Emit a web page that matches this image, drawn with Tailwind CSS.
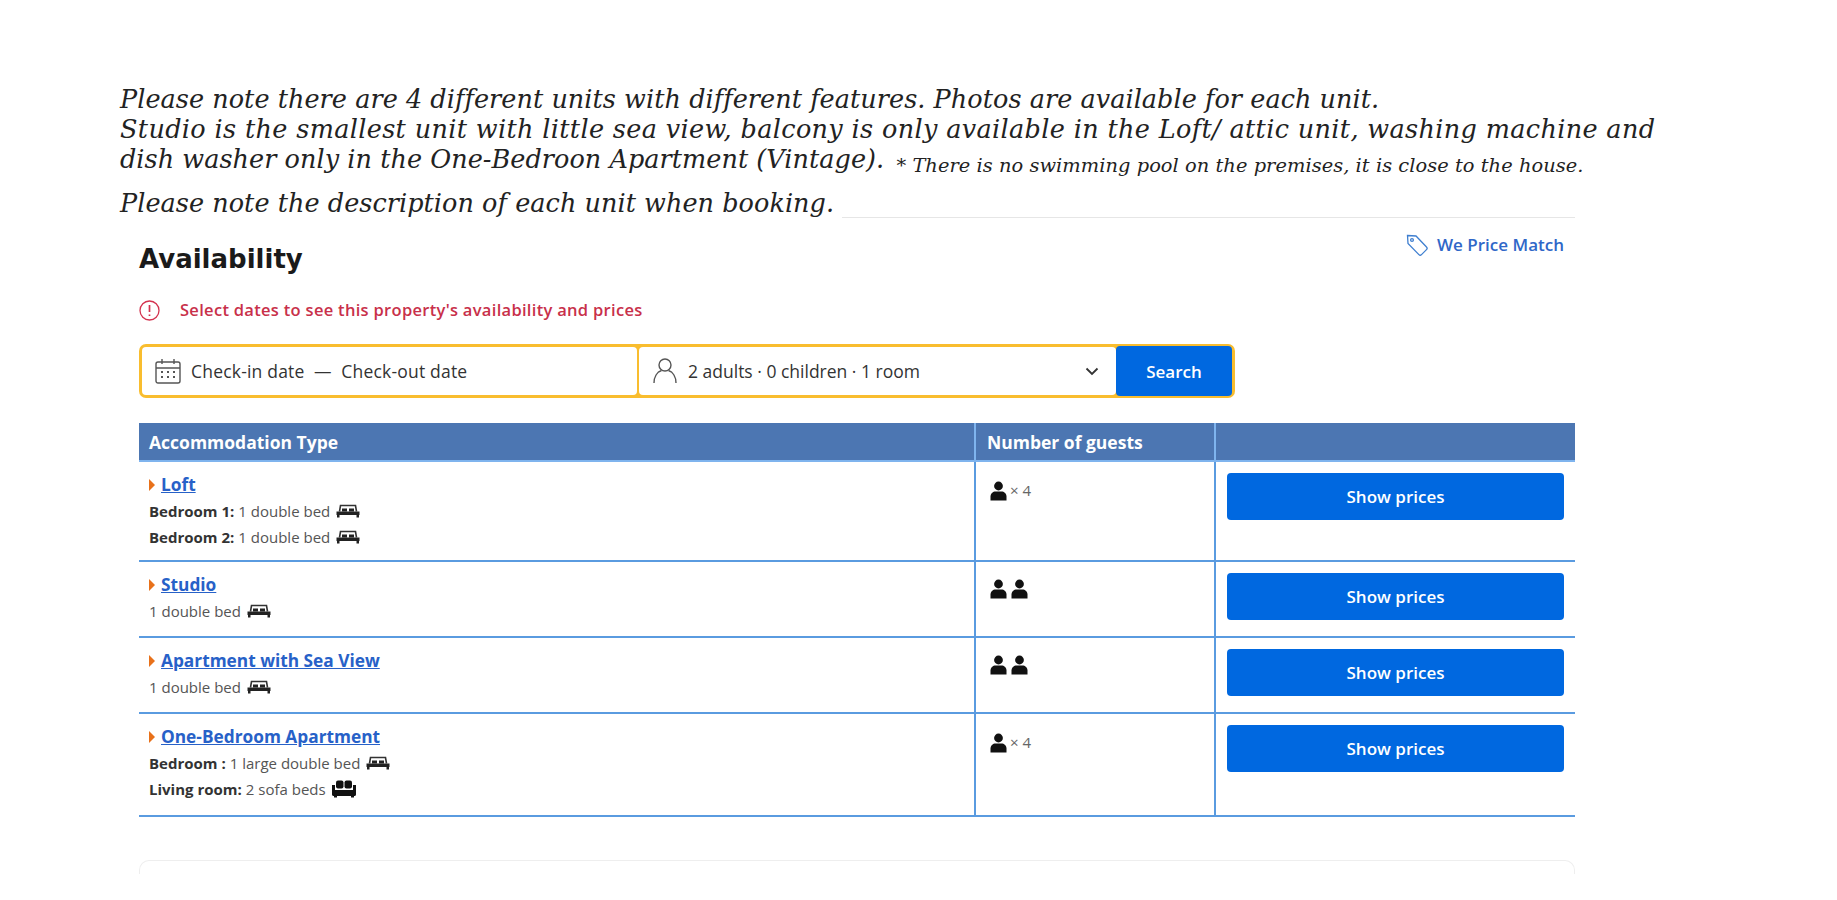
<!doctype html>
<html>
<head>
<meta charset="utf-8">
<script src="https://cdn.jsdelivr.net/npm/@tailwindcss/browser@4"></script>
</head>
<body class="bg-white w-[1837px] h-[900px] overflow-hidden font-['Open_Sans',sans-serif]">
<svg class="hidden">
  <symbol id="p" viewBox="0 0 16 20"><circle cx="8" cy="5" r="4.400" fill="#111"/><path d="M0 19.500v-4c0-3 2.500-5 5-5h6c2.500 0 5 2 5 5v4z" fill="#111"/></symbol>
  <symbol id="bed" viewBox="0 0 24 14"><path d="M3.500 7.500 4.500 1.500h15l1 6" fill="none" stroke="#333" stroke-width="1.600"/><path d="M6 4.500h5v3H6zM13 4.500h5v3h-5z" fill="#222"/><path d="M.5 7.500h23v3.500H.5z" fill="#222"/><path d="M1 11h2.500v2.500H1zM20.500 11H23v2.500h-2.500z" fill="#222"/></symbol>
  <symbol id="sofa" viewBox="0 0 24 18"><rect x="4" y="0.500" width="7.500" height="8" rx="2" fill="#111"/><rect x="12.500" y="0.500" width="7.500" height="8" rx="2" fill="#111"/><path d="M0 5h3v5h18V5h3v9.500c0 1-1 1.500-2 1.500v1.500h-3V16H5v1.500H2V16c-1 0-2-.5-2-1.500z" fill="#111"/></symbol>
</svg>

<main class="pt-[84px]">
  <section class="pl-[120px] font-['DejaVu_Serif',serif] italic text-[#222] text-[25.500px] leading-[30px] tracking-[0.05px]">
    <p class="whitespace-nowrap">Please note there are 4 different units with different features. Photos are available for each unit.</p>
    <p class="whitespace-nowrap tracking-[0.35px]">Studio is the smallest unit with little sea view, balcony is only available in the Loft/ attic unit, washing machine and</p>
    <p class="whitespace-nowrap">dish washer only in the One-Bedroon Apartment (Vintage). <span class="text-[19.400px] leading-none align-[-4px] ml-1">* There is no swimming pool on the premises, it is close to the house.</span></p>
    <div class="flex items-end w-[1455px] mt-[13px]">
      <p class="whitespace-nowrap">Please note the description of each unit when booking.</p>
      <div class="flex-1 ml-2 border-b border-[#e6e6e6]"></div>
    </div>
  </section>

  <section class="ml-[139px] w-[1436px]">
    <div class="flex justify-between items-start h-[58px]">
      <h2 class="font-['DejaVu_Sans',sans-serif] font-bold text-[26px] text-[#1a1a1a] leading-[34px] mt-[24px]">Availability</h2>
      <a class="flex items-center gap-[8px] mt-[15px] mr-[11px] text-[17px] font-semibold text-[#2f67c8] leading-[20px]">
        <svg width="24" height="24" viewBox="0 0 24 24" fill="none" stroke="#3f7fd0" stroke-width="1.300"><path d="M2.500 2.500 11 3 21.500 14c.8.800.8 1.800 0 2.600l-5 5c-.8.800-1.800.8-2.600 0L3 10.500z"/><circle cx="7" cy="7" r="1.400"/></svg>
        We Price Match
      </a>
    </div>

    <div class="flex items-center h-[24px] mt-[22px] text-[16.500px] tracking-[0.3px] font-semibold text-[#c8304a]">
      <svg width="21" height="21" viewBox="0 0 21 21" fill="none" stroke="#d4334f" stroke-width="1.300"><circle cx="10.500" cy="10.500" r="9.500"/><path d="M10.500 5v7M10.500 14.500v1.500" stroke-width="1.700"/></svg>
      <span class="ml-[20px]">Select dates to see this property's availability and prices</span>
    </div>

    <div class="flex w-[1096px] h-[54px] mt-[22px] bg-[#f9bd2e] p-[3px] rounded-[7px] text-[17.500px] text-[#333]">
      <div class="flex items-center w-[495px] bg-white rounded-[4px] pl-[13px] mr-[2px]">
        <svg width="26" height="26" viewBox="0 0 26 26" fill="none" stroke="#555" stroke-width="1.400"><rect x="1" y="4" width="24" height="21" rx="2"/><path d="M1 10h24M7 1v5M19 1v5"/><path d="M6 14h2M12 14h2M18 14h2M6 19h2M12 19h2M18 19h2" stroke-width="2"/></svg>
        <span class="ml-[10px] tracking-[0.2px]">Check-in date&nbsp; —&nbsp; Check-out date</span>
      </div>
      <div class="flex items-center w-[477px] bg-white rounded-[4px] pl-[13px]">
        <svg width="26" height="28" viewBox="0 0 26 28" fill="none" stroke="#555" stroke-width="1.400"><circle cx="13" cy="8" r="6"/><path d="M2 26c0-6 3-11 7.500-12.500M24 26c0-6-3-11-7.500-12.500"/></svg>
        <span class="ml-[10px]">2 adults · 0 children · 1 room</span>
        <svg class="ml-auto mr-[17px]" width="14" height="9" viewBox="0 0 14 9" fill="none" stroke="#333" stroke-width="1.800"><path d="M1.500 1.500 7 7l5.500-5.500"/></svg>
      </div>
      <button class="w-[116px] -my-[1px] -mr-[1px] bg-[#0068e0] text-white text-[17px] font-semibold rounded-[4px]">Search</button>
    </div>

    <table class="table-fixed w-[1436px] mt-[25px] text-[15px] text-[#333] font-['Open_Sans',sans-serif]">
      <colgroup><col class="w-[836px]"><col class="w-[240px]"><col></colgroup>
      <thead>
        <tr class="h-[38px] bg-[#4c76b2] text-white text-left text-[17.500px] font-bold">
          <th class="pl-[10px] border-b-2 border-[#7fb4ee]">Accommodation Type</th>
          <th class="pl-[11px] border-x-2 border-b-2 border-[#7fb4ee]">Number of guests</th>
          <th class="border-b-2 border-[#7fb4ee]"></th>
        </tr>
      </thead>
      <tbody>
        <tr class="h-[100px] border-b-2 border-[#5a9be0] align-top">
          <td class="pl-[10px] pt-[12px]">
            <div class="flex items-center h-[22px]"><span class="w-0 h-0 border-y-[6px] border-y-transparent border-l-[6px] border-l-[#e8711a] mr-[6px]"></span><a class="text-[17.300px] font-bold text-[#2761c8] underline">Loft</a></div>
            <div class="flex items-center h-[26px] mt-[2px]"><b>Bedroom 1:</b><span class="ml-1 text-[#555]">1 double bed</span><svg class="ml-[6px]" width="24" height="14"><use href="#bed"/></svg></div>
            <div class="flex items-center h-[26px]"><b>Bedroom 2:</b><span class="ml-1 text-[#555]">1 double bed</span><svg class="ml-[6px]" width="24" height="14"><use href="#bed"/></svg></div>
          </td>
          <td class="pl-[14px] pt-[17px] border-x-2 border-[#5a9be0]"><div class="flex items-center"><svg width="17" height="20"><use href="#p"/></svg><span class="ml-[3px] text-[#666]">× 4</span></div></td>
          <td class="pl-[11px] pr-[11px] pt-[11px]"><button class="w-full h-[47px] bg-[#0068e0] text-white text-[17px] font-semibold rounded-[4px]">Show prices</button></td>
        </tr>
        <tr class="h-[76px] border-b-2 border-[#5a9be0] align-top">
          <td class="pl-[10px] pt-[12px]">
            <div class="flex items-center h-[22px]"><span class="w-0 h-0 border-y-[6px] border-y-transparent border-l-[6px] border-l-[#e8711a] mr-[6px]"></span><a class="text-[17.300px] font-bold text-[#2761c8] underline">Studio</a></div>
            <div class="flex items-center h-[26px] mt-[2px]"><span class="text-[#555]">1 double bed</span><svg class="ml-[6px]" width="24" height="14"><use href="#bed"/></svg></div>
          </td>
          <td class="pl-[14px] pt-[17px] border-x-2 border-[#5a9be0]"><div class="flex items-center gap-[4px]"><svg width="17" height="20"><use href="#p"/></svg><svg width="17" height="20"><use href="#p"/></svg></div></td>
          <td class="pl-[11px] pr-[11px] pt-[11px]"><button class="w-full h-[47px] bg-[#0068e0] text-white text-[17px] font-semibold rounded-[4px]">Show prices</button></td>
        </tr>
        <tr class="h-[76px] border-b-2 border-[#5a9be0] align-top">
          <td class="pl-[10px] pt-[12px]">
            <div class="flex items-center h-[22px]"><span class="w-0 h-0 border-y-[6px] border-y-transparent border-l-[6px] border-l-[#e8711a] mr-[6px]"></span><a class="text-[17.300px] font-bold text-[#2761c8] underline">Apartment with Sea View</a></div>
            <div class="flex items-center h-[26px] mt-[2px]"><span class="text-[#555]">1 double bed</span><svg class="ml-[6px]" width="24" height="14"><use href="#bed"/></svg></div>
          </td>
          <td class="pl-[14px] pt-[17px] border-x-2 border-[#5a9be0]"><div class="flex items-center gap-[4px]"><svg width="17" height="20"><use href="#p"/></svg><svg width="17" height="20"><use href="#p"/></svg></div></td>
          <td class="pl-[11px] pr-[11px] pt-[11px]"><button class="w-full h-[47px] bg-[#0068e0] text-white text-[17px] font-semibold rounded-[4px]">Show prices</button></td>
        </tr>
        <tr class="h-[103px] border-b-2 border-[#5a9be0] align-top">
          <td class="pl-[10px] pt-[12px]">
            <div class="flex items-center h-[22px]"><span class="w-0 h-0 border-y-[6px] border-y-transparent border-l-[6px] border-l-[#e8711a] mr-[6px]"></span><a class="text-[17.300px] font-bold text-[#2761c8] underline">One-Bedroom Apartment</a></div>
            <div class="flex items-center h-[26px] mt-[2px]"><b>Bedroom :</b><span class="ml-1 text-[#555]">1 large double bed</span><svg class="ml-[6px]" width="24" height="14"><use href="#bed"/></svg></div>
            <div class="flex items-center h-[26px]"><b>Living room:</b><span class="ml-1 text-[#555]">2 sofa beds</span><svg class="ml-[6px]" width="24" height="18"><use href="#sofa"/></svg></div>
          </td>
          <td class="pl-[14px] pt-[17px] border-x-2 border-[#5a9be0]"><div class="flex items-center"><svg width="17" height="20"><use href="#p"/></svg><span class="ml-[3px] text-[#666]">× 4</span></div></td>
          <td class="pl-[11px] pr-[11px] pt-[11px]"><button class="w-full h-[47px] bg-[#0068e0] text-white text-[17px] font-semibold rounded-[4px]">Show prices</button></td>
        </tr>
      </tbody>
    </table>

    <div class="h-[14px] mt-[43px] border border-b-0 border-[#eeeeee] rounded-t-[10px]"></div>
  </section>
</main>
</body>
</html>
